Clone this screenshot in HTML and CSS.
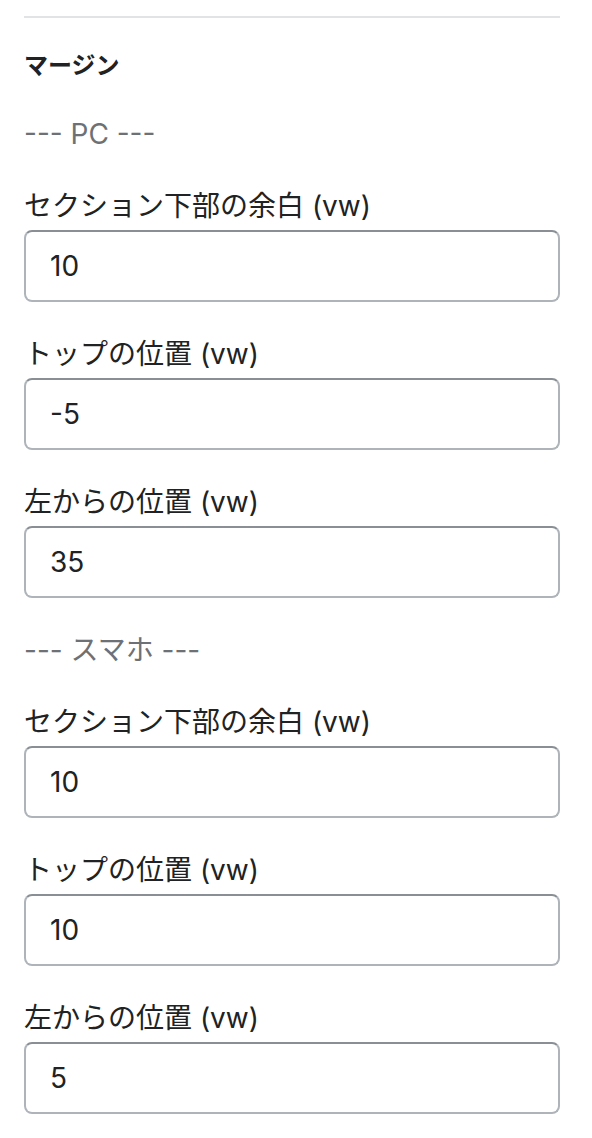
FILE: index.html
```html
<!DOCTYPE html>
<html lang="ja">
<head>
<meta charset="utf-8">
<link rel="stylesheet" href="styles.css">
</head>
<body>
<div class="panel">
  <hr class="divider">
  <h3 class="heading">マージン</h3>
  <p class="note">--- PC ---</p>
  <div class="field">
    <label class="label">セクション下部の余白 (vw)</label>
    <div class="input">10</div>
  </div>
  <div class="field">
    <label class="label">トップの位置 (vw)</label>
    <div class="input">-5</div>
  </div>
  <div class="field">
    <label class="label">左からの位置 (vw)</label>
    <div class="input">35</div>
  </div>
  <p class="note">--- スマホ ---</p>
  <div class="field">
    <label class="label">セクション下部の余白 (vw)</label>
    <div class="input">10</div>
  </div>
  <div class="field">
    <label class="label">トップの位置 (vw)</label>
    <div class="input">10</div>
  </div>
  <div class="field">
    <label class="label">左からの位置 (vw)</label>
    <div class="input">5</div>
  </div>
</div>
</body>
</html>
```

FILE: styles.css
```css
html, body {
  margin: 0;
  padding: 0;
  background: #ffffff;
}
body {
  font-family: "Inter", "Noto Sans CJK JP", sans-serif;
  color: #202223;
}
.panel {
  padding: 16px 32px 0 24px;
  display: flex;
  flex-direction: column;
  gap: 32px;
}
.divider {
  margin: 0;
  border: 0;
  border-top: 2px solid #e1e3e5;
  height: 0;
}
.heading {
  margin: 0;
  font-size: 24px;
  line-height: 32px;
  font-weight: 700;
}
.note {
  margin: 0;
  font-size: 28px;
  line-height: 40px;
  color: #6d7175;
}
.field {
  display: flex;
  flex-direction: column;
  gap: 4px;
}
.label {
  font-size: 28px;
  line-height: 40px;
}
.input {
  height: 68px;
  box-sizing: content-box;
  border: 2px solid #aeb4b9;
  border-top-color: #898f94;
  border-radius: 8px;
  padding: 0 24px;
  font-size: 28px;
  line-height: 68px;
  color: #202223;
}
```
